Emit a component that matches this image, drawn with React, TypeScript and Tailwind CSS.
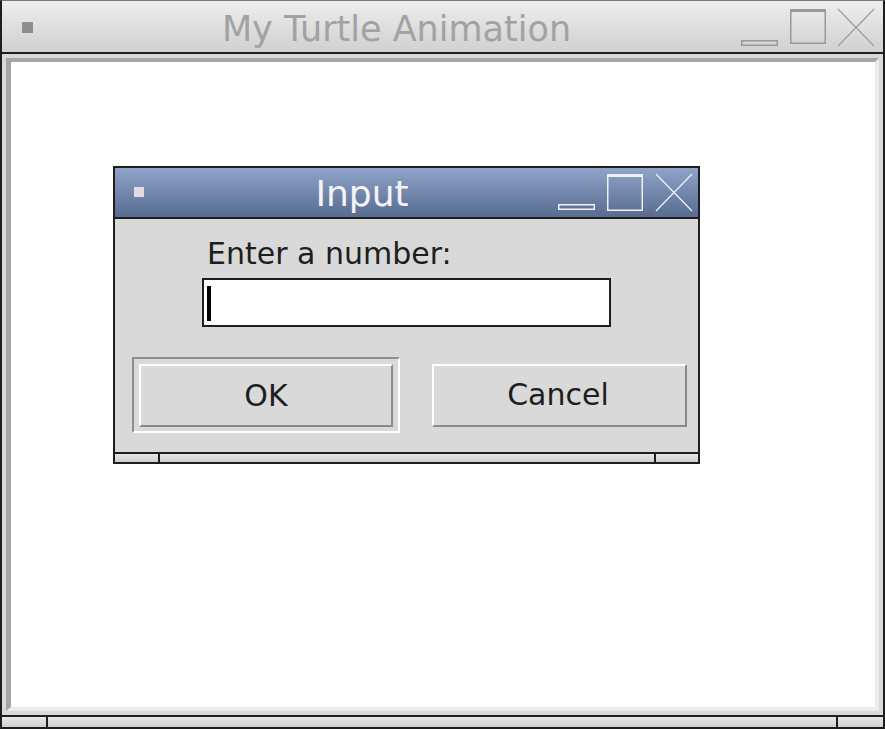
import React from "react";

function MinIcon({ w, h, y, color }: { w: number; h: number; y: number; color: string }) {
  return (
    <svg width={w} height={h} className="shrink-0">
      <rect x={0.75} y={y + 0.75} width={w - 1.5} height={4.5} fill="none" stroke={color} strokeWidth={1.5} />
    </svg>
  );
}

function MaxIcon({ w, h, y, size, color }: { w: number; h: number; y: number; size: number; color: string }) {
  return (
    <svg width={w} height={h} className="shrink-0">
      <rect x={0.75} y={y + 0.75} width={w - 1.5} height={size - 1.5} fill="none" stroke={color} strokeWidth={1.5} />
      <rect x={0} y={y} width={w} height={3} fill={color} />
    </svg>
  );
}

function CloseIcon({ w, h, y, size, color }: { w: number; h: number; y: number; size: number; color: string }) {
  return (
    <svg width={w} height={h} className="shrink-0">
      <line x1={1} y1={y} x2={w - 1} y2={y + size} stroke={color} strokeWidth={1.3} />
      <line x1={w - 1} y1={y} x2={1} y2={y + size} stroke={color} strokeWidth={1.3} />
    </svg>
  );
}

export default function App() {
  return (
    <div className="relative h-[730px] w-[885px] bg-white font-['DejaVu_Sans',sans-serif]">
      {/* main turtle window */}
      <div className="flex h-[729px] w-[885px] flex-col border-x-2 border-t border-[#1e1e1e] border-t-[#7a7a7a]">
        <div className="flex h-[51px] items-stretch bg-gradient-to-b from-[#eeeeee] to-[#d0d0d0]">
          <div className="ml-[20px] mt-[21px] h-[11px] w-[11px] bg-[#8e8e8e]" />
          <div className="flex flex-1 items-center justify-center pl-[19px] pt-[5px] text-[35px] leading-[36px] text-[#a2a2a2]">
            My Turtle Animation
          </div>
          <div className="mr-[8px] flex gap-[12px]">
            <MinIcon w={37} h={51} y={39} color="#9a9a9a" />
            <MaxIcon w={36} h={51} y={8} size={35} color="#9a9a9a" />
            <div className="-ml-[1px]">
              <CloseIcon w={38} h={51} y={8} size={37} color="#a0a0a0" />
            </div>
          </div>
        </div>
        <div className="h-[2px] bg-[#1e1e1e]" />
        <div className="flex flex-1 flex-col bg-[#d9d9d9] p-[4px]">
          <div className="flex-1 border-[4px] border-l-[5px] border-t-[#a5a5a5] border-l-[#a5a5a5] border-b-[#ececec] border-r-[#ececec] bg-white" />
        </div>
        <div className="h-[2px] bg-[#1e1e1e]" />
        <div className="flex h-[10px] bg-gradient-to-b from-[#e8e8e8] to-[#cfcfcf]">
          <div className="w-[46px] border-r-2 border-[#1e1e1e]" />
          <div className="flex-1" />
          <div className="w-[47px] border-l-2 border-[#1e1e1e]" />
        </div>
        <div className="h-[2px] bg-[#1e1e1e]" />
      </div>

      {/* input dialog window */}
      <div className="absolute left-[113px] top-[166px] flex w-[587px] flex-col border-2 border-[#1e1e1e]">
        <div className="flex h-[49px] items-stretch bg-gradient-to-b from-[#90a4c9] to-[#586b91]">
          <div className="ml-[19px] mt-[19px] h-[10px] w-[10px] bg-[#e2dbe4]" />
          <div className="flex flex-1 items-center justify-center pl-[22px] pt-[3px] text-[36px] leading-[36px] text-[#f4f4f6]">
            Input
          </div>
          <div className="mr-[5px] flex gap-[12px]">
            <MinIcon w={37} h={49} y={36} color="#eef0f5" />
            <MaxIcon w={36} h={49} y={6} size={37} color="#eef0f5" />
            <CloseIcon w={38} h={49} y={6} size={37} color="#eef0f5" />
          </div>
        </div>
        <div className="h-[2px] bg-[#1e1e1e]" />
        <div className="flex h-[233px] flex-col bg-[#d9d9d9]">
          <div className="ml-[92px] mt-[20px] text-[30px] leading-[30px] text-[#1e1e1e]">Enter a number:</div>
          <div className="ml-[87px] mt-[9px] flex h-[49px] w-[409px] items-start border-2 border-[#1e1e1e] bg-white">
            <div className="ml-[3px] mt-[6px] h-[35px] w-[4px] bg-black" />
          </div>
          <div className="ml-[17px] mt-[30px] flex items-center">
            <div className="h-[76px] w-[268px] border-2 border-t-[#8e8e8e] border-l-[#8e8e8e] border-b-white border-r-white px-[5px] pt-[5px] pb-[4px]">
              <div className="flex h-full w-full items-center justify-center border-2 border-t-white border-l-white border-b-[#8a8a8a] border-r-[#8a8a8a] text-[30px] leading-[30px] text-[#1e1e1e]">
                OK
              </div>
            </div>
            <div className="ml-[32px] flex h-[63px] w-[255px] items-center justify-center border-2 border-t-white border-l-white border-b-[#8a8a8a] border-r-[#8a8a8a] pr-[3px] text-[30px] leading-[30px] text-[#1e1e1e]">
              Cancel
            </div>
          </div>
        </div>
        <div className="h-[2px] bg-[#1e1e1e]" />
        <div className="flex h-[8px] bg-gradient-to-b from-[#e6e6e6] to-[#cfcfcf]">
          <div className="w-[45px] border-r-2 border-[#1e1e1e]" />
          <div className="flex-1" />
          <div className="w-[44px] border-l-2 border-[#1e1e1e]" />
        </div>
      </div>
    </div>
  );
}
